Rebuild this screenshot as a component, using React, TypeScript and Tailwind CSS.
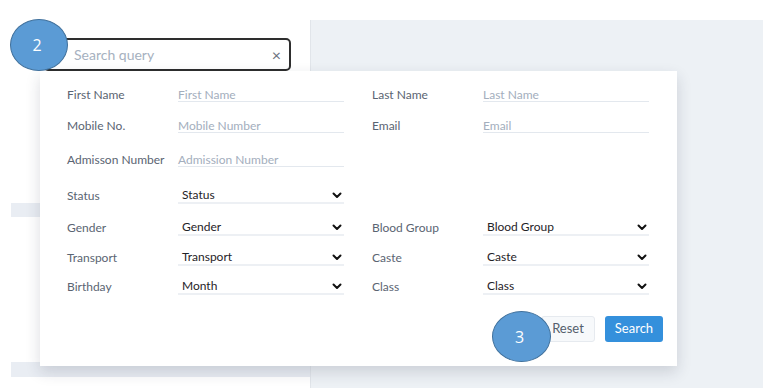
import React from 'react';

type Field = { label: string; kind: 'input' | 'select'; value: string };
type Row = { h: number; left: Field; right?: Field };

const rows: Row[] = [
  { h: 32, left: { label: 'First Name', kind: 'input', value: 'First Name' }, right: { label: 'Last Name', kind: 'input', value: 'Last Name' } },
  { h: 31, left: { label: 'Mobile No.', kind: 'input', value: 'Mobile Number' }, right: { label: 'Email', kind: 'input', value: 'Email' } },
  { h: 34, left: { label: 'Admisson Number', kind: 'input', value: 'Admission Number' } },
  { h: 36, left: { label: 'Status', kind: 'select', value: 'Status' } },
  { h: 32, left: { label: 'Gender', kind: 'select', value: 'Gender' }, right: { label: 'Blood Group', kind: 'select', value: 'Blood Group' } },
  { h: 30, left: { label: 'Transport', kind: 'select', value: 'Transport' }, right: { label: 'Caste', kind: 'select', value: 'Caste' } },
  { h: 29, left: { label: 'Birthday', kind: 'select', value: 'Month' }, right: { label: 'Class', kind: 'select', value: 'Class' } },
];

function Chevron() {
  return (
    <svg width="10" height="7" viewBox="0 0 10 7" className="shrink-0">
      <path d="M1.5 1.5 L5 5 L8.5 1.5" fill="none" stroke="#111" strokeWidth="2" strokeLinecap="round" strokeLinejoin="round" />
    </svg>
  );
}

function Cell({ field, width }: { field: Field; width: string }) {
  return (
    <div className={`flex items-center ${width}`}>
      <span className="w-[111px] shrink-0 text-[12px] text-[#5a6472] pt-[2px]">{field.label}</span>
      {field.kind === 'input' ? (
        <div className="w-[166px] h-[15px] border-b border-[#e3e8ee] flex items-center text-[12px] text-[#a3aebd] leading-none pt-[2px]">
          {field.value}
        </div>
      ) : (
        <div className="w-[166px] h-[17px] border-b-2 border-[#edf0f4] flex items-center justify-between pl-[4px] pr-[2px] pt-[2px] text-[12px] text-[#1f2328] leading-none">
          <span>{field.value}</span>
          <Chevron />
        </div>
      )}
    </div>
  );
}

function Badge({ n, className }: { n: string; className: string }) {
  return (
    <div className={`absolute rounded-[50%] bg-[#5b9bd5] border-[1.5px] border-[#41719c] flex items-center justify-center text-white text-[16px] font-['Open_Sans',sans-serif] ${className}`}>
      <span className="-ml-[4px]">{n}</span>
    </div>
  );
}

export default function App() {
  return (
    <div className="relative w-[767px] h-[388px] bg-white overflow-hidden font-['Lato',sans-serif]">
      <div className="flex h-full">
        {/* Left column */}
        <div className="w-[310px] shrink-0 flex flex-col">
          <div className="h-[203px] pt-[38px] pl-[43px]">
            <div className="w-[248px] h-[33px] border-2 border-[#2e2e2e] rounded-[5px] flex items-center justify-between pl-[29px] pr-[8px]">
              <span className="text-[14px] text-[#a6b1c0]">Search query</span>
              <span className="text-[16px] text-[#6b7280] leading-none">×</span>
            </div>
          </div>
          <div className="ml-[11px] h-[14px] bg-[#e9edf3]" />
          <div className="ml-[11px] h-[145px] bg-white" />
          <div className="ml-[11px] h-[15px] bg-[#e9edf3]" />
          <div className="ml-[11px] flex-1 bg-white" />
        </div>
        {/* Right area */}
        <div className="flex-1 mt-[20px] mr-[4px] bg-[#edf1f5] border-l border-[#e1e5ea]" />
      </div>

      {/* Dropdown panel */}
      <div className="absolute left-[40px] top-[71px] w-[637px] h-[295px] bg-white shadow-[0_6px_14px_rgba(30,40,60,0.16)] pt-[1px] pl-[27px] pr-[14px]">
        {rows.map((r, i) => (
          <div key={i} className="flex items-end" style={{ height: r.h }}>
            <Cell field={r.left} width="w-[305px]" />
            {r.right && <Cell field={r.right} width="w-[277px]" />}
          </div>
        ))}
        <div className="flex justify-end gap-[10px] mt-[20px]">
          <button className="h-[26px] w-[54px] rounded-[3px] bg-[#f7f9fb] border border-[#e6eaef] text-[13px] text-[#555f6d]">
            Reset
          </button>
          <button className="h-[26px] w-[58px] rounded-[3px] bg-[#3490dc] text-[13px] text-white">
            Search
          </button>
        </div>
      </div>

      <Badge n="2" className="left-[10px] top-[19px] w-[58px] h-[52px]" />
      <Badge n="3" className="left-[492px] top-[311px] w-[59px] h-[51px]" />
    </div>
  );
}
